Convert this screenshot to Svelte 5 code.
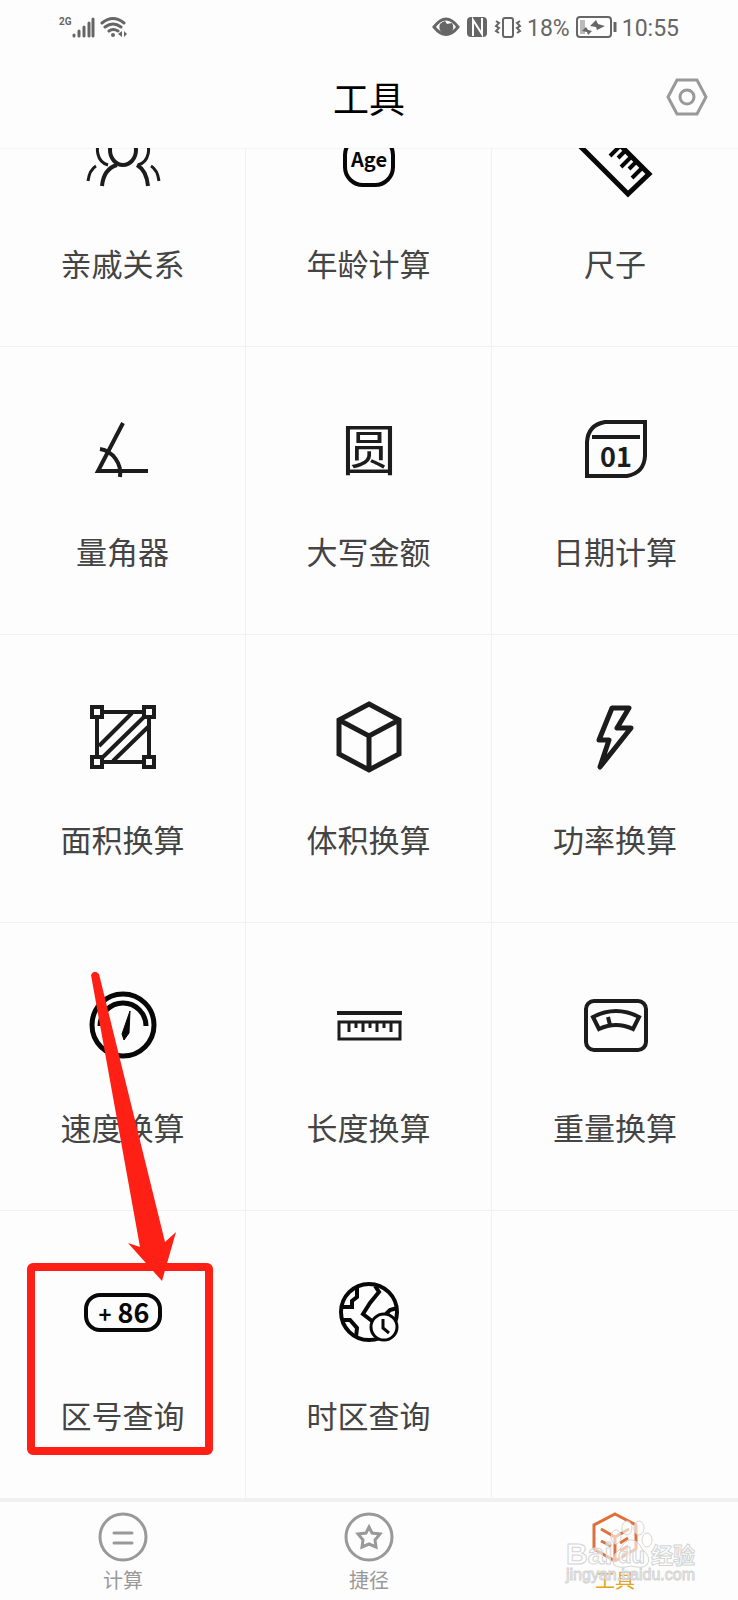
<script>
  let tools = [
    { icon: 'family', name: '亲戚关系' },
    { icon: 'age', name: '年龄计算' },
    { icon: 'ruler', name: '尺子' },
    { icon: 'angle', name: '量角器' },
    { icon: 'money', name: '大写金额' },
    { icon: 'date', name: '日期计算' },
    { icon: 'area', name: '面积换算' },
    { icon: 'volume', name: '体积换算' },
    { icon: 'power', name: '功率换算' },
    { icon: 'speed', name: '速度换算' },
    { icon: 'length', name: '长度换算' },
    { icon: 'weight', name: '重量换算' },
    { icon: 'code', name: '区号查询' },
    { icon: 'timezone', name: '时区查询' }
  ]

  let tabs = [
    { id: 'calc', name: '计算' },
    { id: 'shortcut', name: '捷径' },
    { id: 'tools', name: '工具' }
  ]

  let current = $state('tools')
</script>

{#snippet toolIcon(name)}
  <svg class="tool-icon {name}" viewBox="0 0 80 80" aria-hidden="true">
    {#if name === 'family'}
      <ellipse cx="40" cy="28" rx="13" ry="15" />
      <path d="M19 17 C11 25 14 40 25 43 M61 17 C69 25 66 40 55 43" stroke-width="3" />
      <path d="M19 64 C20 53 24 46 34 43 M65 64 C64 53 61 47 54 43" />
      <path d="M5 59 C6 51 8 47 13 44 M76 59 C75 51 73 47 68 44" stroke-width="3" />
    {:else if name === 'age'}
      <rect x="16" y="15" width="48" height="48" rx="18" />
      <text x="40" y="45" font-size="20" font-weight="700">Age</text>
    {:else if name === 'ruler'}
      <path d="M53 72 L74 52 L27 5 L6 25 Z" stroke-width="5" />
      <path d="M67 46 L57 56 M61 40 L54 47 M56 35 L46 45 M50 29 L43 36 M45 24 L35 34" />
    {:else if name === 'angle'}
      <path d="M40 13 L15 61 H65" />
      <path d="M17 39 C30 41 39 54 37 67" />
    {:else if name === 'money'}
      <text x="40" y="60" font-size="55">圆</text>
    {:else if name === 'date'}
      <path d="M30 12 H70 V46 Q69 63 52 66 H12 V32 Q13 15 30 12 Z" />
      <path d="M17 27 H65" />
      <text x="41" y="57" font-size="27" font-weight="700">01</text>
    {:else if name === 'area'}
      <path d="M20 14 H60 M20 64 H60 M14 20 V58 M66 20 V58" />
      <path d="M49 15 L16 48 M61 19 L20 59 M65 29 L30 63" />
      <path d="M9 9 H19 V19 H9 Z M61 9 H71 V19 H61 Z M9 59 H19 V69 H9 Z M61 59 H71 V69 H61 Z" />
    {:else if name === 'volume'}
      <path d="M40 6 L70 22 V56 L40 72 L10 56 V22 Z M10 22 L40 38 L70 22 M40 38 V71" stroke-width="5" />
    {:else if name === 'power'}
      <path d="M37 10 H54 L42 30 H56 L25 69 L34 42 H24 Z" stroke-width="5" stroke-linejoin="round" />
    {:else if name === 'speed'}
      <circle cx="40" cy="39" r="31" stroke-width="5" />
      <path d="M17 40 A23 23 0 0 1 63 40" stroke-width="5" />
      <path d="M47 25 L39 48 L41 54 L46 47 Z" fill="currentColor" stroke-width="1" />
    {:else if name === 'length'}
      <path d="M8 27 H73" />
      <path d="M10 36 H71 V53 H10 Z M20 36 V46 M27 36 V42 M34 36 V46 M41 36 V42 M48 36 V46 M55 36 V42 M62 36 V46" stroke-width="3" />
    {:else if name === 'weight'}
      <rect x="11" y="15" width="60" height="49" rx="8" />
      <path d="M18 31 Q41 19 64 31 L58 43 Q41 35 24 43 Z M33 31 L35 39" />
    {:else if name === 'code'}
      <rect x="3" y="21" width="74" height="35" rx="14" />
      <text x="41" y="49" font-size="27" font-weight="700"><tspan font-size="22">+</tspan> 86</text>
    {:else if name === 'timezone'}
      <circle cx="40" cy="38" r="28" />
      <path d="M28 14 V23 L23 27 V33 H14 M14 46 H21 L28 54 L27 63 M46 12 L50 18 L41 29 L34 40 L43 47 M68 34 L61 36 L57 40" />
      <circle class="clock" cx="55" cy="53" r="13" stroke-width="3" />
      <path d="M54 45 V54 L60 59" stroke-width="3" />
    {/if}
  </svg>
{/snippet}

<div class="app">
  <div class="status">
    <div class="status-left">
      <span class="network">2G</span>
      <svg width="56" height="24" viewBox="0 0 56 24" aria-hidden="true">
        <path d="M2 21 V20 M7 21 V16 M12 21 V12 M17 21 V8 M21 21 V4" stroke-width="3" stroke-linecap="round" />
        <path d="M30 8 Q41 -1 52 8 M33 12 Q41 6 49 12 M37 16 Q41 13 46 16" stroke-width="3" stroke-linecap="round" />
        <circle class="solid" cx="41" cy="20" r="2" />
        <path class="solid" d="M50 16 V22 L46 19 Z M52 16 V22 L55 19 Z" />
      </svg>
    </div>
    <div class="status-right">
      <svg width="90" height="24" viewBox="0 0 90 24" aria-hidden="true">
        <path d="M2 12 Q14 -4 26 12 Q14 27 2 12 Z" stroke-width="3" />
        <path class="solid" d="M13 6 L15 9 L20 8 A7 7 0 1 1 8 9 Q10 7 13 6 Z" />
        <rect class="solid" x="35" y="2" width="20" height="20" rx="4" />
        <path class="cut" d="M41 21 V5 L50 19 V3" />
        <rect x="71" y="3" width="10" height="19" rx="2" />
        <path d="M64 6 L67 8 L64 11 L67 13 L64 16 L67 18 M88 6 L85 8 L88 11 L85 13 L88 16 L85 18" />
      </svg>
      <span>18%</span>
      <svg width="42" height="24" viewBox="0 0 42 24" aria-hidden="true">
        <rect x="2" y="2" width="34" height="20" rx="3" />
        <rect class="level" x="5" y="5" width="5" height="14" />
        <path class="solid" d="M21 5 L23 9 L30 11 L22 15 L21 12 L15 11 Z M11 12 L13 15 L17 16 L13 20 L12 17 L7 16 Z" />
        <path d="M40 7 V17" stroke-width="3" />
      </svg>
      <span>10:55</span>
    </div>
  </div>

  <header>
    <h1>工具</h1>
    <button class="settings" aria-label="设置">
      <svg width="42" height="38" viewBox="0 0 42 38" aria-hidden="true">
        <path d="M11 2 H31 L40 19 L31 36 H11 L2 19 Z" />
        <circle cx="21" cy="19" r="7" />
      </svg>
    </button>
  </header>

  <main>
    <div class="grid">
      {#each tools as tool}
        <div class="cell">
          <button class="tool">
            {@render toolIcon(tool.icon)}
            <span>{tool.name}</span>
          </button>
          {#if tool.icon === 'code'}
            <svg class="mark" width="200" height="500" viewBox="0 0 200 500" aria-hidden="true">
              <rect x="11" y="304" width="178" height="184" rx="2" />
              <path d="M71 12 Q74 6 79 11 L145 279 L156 269 L142 318 L108 280 L120 284 Z" />
            </svg>
          {/if}
        </div>
      {/each}
      <div class="cell"></div>
    </div>
  </main>

  <nav>
    {#each tabs as tab}
      <button class="tab" class:active={current === tab.id} onclick={() => current = tab.id}>
        <svg width="50" height="50" viewBox="0 0 50 50" aria-hidden="true">
          {#if tab.id === 'calc'}
            <circle cx="25" cy="25" r="23" />
            <path d="M16 21 H34 M16 31 H34" stroke-linecap="round" />
          {:else if tab.id === 'shortcut'}
            <circle cx="25" cy="25" r="23" />
            <path d="M25 15 L28 21 L36 22 L31 28 L32 35 L25 32 L18 35 L19 28 L14 22 L22 21 Z" />
          {:else}
            <path d="M25 2 L46 13 V37 L25 49 L4 37 V13 Z" />
            <path d="M11 17 L25 25 L39 17 M11 29 L21 34 M25 25 V48 M30 31 L38 26 M30 39 L38 34" />
          {/if}
        </svg>
        <span>{tab.name}</span>
      </button>
    {/each}
    <svg class="watermark" width="144" height="72" viewBox="0 0 144 72" aria-hidden="true">
      <g class="paw">
        <ellipse cx="58" cy="22" rx="5" ry="7" />
        <ellipse cx="69" cy="13" rx="5" ry="7" />
        <ellipse cx="81" cy="13" rx="5" ry="7" />
        <ellipse cx="89" cy="25" rx="5" ry="7" />
        <path d="M73 25 Q80 25 84 34 Q94 42 89 50 Q84 54 73 51 Q62 54 56 50 Q52 42 62 34 Q67 25 73 25 Z" />
      </g>
      <text x="8" y="49" font-size="30" font-weight="700">Bai</text>
      <text x="60" y="48" font-size="22" font-weight="700">du</text>
      <text x="93" y="48" font-size="22" font-weight="700">经验</text>
      <text x="8" y="65" font-size="16">jingyan.baidu.com</text>
    </svg>
  </nav>
</div>

<style>
:global(body) {
  margin: 0;
  background: #fdfdfd;
}

.app {
  font-family: "Noto Sans CJK SC", sans-serif;
  color: #444;
}

button {
  padding: 0;
  border: none;
  background: none;
  font-family: inherit;
  color: inherit;
  cursor: pointer;
}

svg {
  display: block;
  fill: none;
  stroke: currentColor;
}

.status {
  display: flex;
  justify-content: space-between;
  align-items: center;
  height: 50px;
  padding: 8px 59px 0;
  box-sizing: border-box;
  font-family: Roboto, sans-serif;
  font-size: 23px;
  line-height: 28px;
  color: #666;
  stroke-width: 2;
}

.status-left,
.status-right {
  display: flex;
  height: 28px;
}

.status-right {
  gap: 5px;
}

.network {
  font-size: 10px;
  line-height: 14px;
  font-weight: 700;
}

.solid {
  fill: currentColor;
  stroke: none;
}

.cut {
  stroke: #fdfdfd;
}

.level {
  fill: #bbb;
  stroke: none;
}

header {
  display: grid;
  grid-template-columns: 1fr auto 1fr;
  align-items: center;
  height: 98px;
  padding: 0 30px 4px;
  box-sizing: border-box;
}

h1 {
  grid-column: 2;
  margin: 0;
  font-size: 36px;
  line-height: 48px;
  font-weight: 400;
  color: #000;
}

.settings {
  justify-self: end;
  color: #999;
  stroke-width: 3;
}

main {
  overflow: hidden;
  box-shadow: inset 0 1px #f5f5f5;
}

/* list is scrolled down, the first row is partly under the header */
.grid {
  display: grid;
  grid-template-columns: repeat(3, 1fr);
  margin-top: -89px;
}

.cell {
  position: relative;
  height: 288px;
  box-sizing: border-box;
  border-right: 1px solid #f1f1f1;
  border-bottom: 1px solid #f1f1f1;
}

.cell:nth-child(3n) {
  border-right: none;
}

.tool {
  display: flex;
  flex-direction: column;
  align-items: center;
  gap: 39px;
  width: 100%;
  height: 100%;
  padding-top: 63px;
}

.tool span {
  font-size: 31px;
  line-height: 44px;
}

.tool-icon {
  width: 80px;
  height: 80px;
  color: #1c1c1c;
  stroke-width: 4;
}

.tool-icon text {
  fill: currentColor;
  stroke: none;
  text-anchor: middle;
}

.age,
.ruler,
.speed,
.code,
.timezone {
  color: #080808;
}

.clock {
  fill: #fdfdfd;
}

.mark {
  position: absolute;
  left: 20px;
  top: -248px;
  color: #ff2015;
  stroke-width: 8;
  pointer-events: none;
}

.mark path {
  fill: currentColor;
  stroke: none;
}

nav {
  position: relative;
  display: grid;
  grid-template-columns: repeat(3, 1fr);
  border-top: 3px solid #f0f0f0;
}

.tab {
  display: flex;
  flex-direction: column;
  align-items: center;
  gap: 4px;
  padding: 10px 0 5px;
  color: #999;
  stroke-width: 3;
}

.tab span {
  font-size: 20px;
  line-height: 28px;
}

.tab.active svg {
  color: #e0703a;
}

.tab.active span {
  color: #e3a51c;
}

.watermark {
  position: absolute;
  right: 36px;
  bottom: 12px;
  font-family: "Liberation Sans", "Noto Sans CJK SC", sans-serif;
  color: #d4d4d4;
  stroke-width: 1;
  pointer-events: none;
}

.watermark text,
.paw {
  fill: #fff;
  fill-opacity: 0.6;
}
</style>
